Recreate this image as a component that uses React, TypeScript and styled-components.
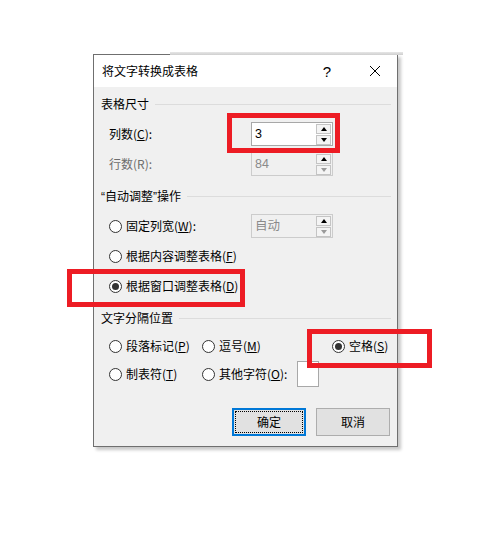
import styled, { createGlobalStyle } from 'styled-components';

const GlobalStyle = createGlobalStyle`
  html, body {
    margin: 0;
    padding: 0;
    background: #ffffff;
  }
  body {
    font-family: "Noto Sans CJK SC", "Liberation Sans", sans-serif;
    font-size: 12px;
    color: #000;
  }
`;

const Page = styled.div`
  position: relative;
  min-height: 548px;
  padding: 54px 0 0 93px;
  box-sizing: border-box;
`;

const Dialog = styled.div`
  position: relative;
  width: 305px;
  height: 393px;
  box-sizing: border-box;
  border: 1px solid #6f6f6f;
  background: #f0f0f0;
  display: flex;
  flex-direction: column;
  box-shadow: 3px 3px 3px rgba(0, 0, 0, 0.22);

  &::before {
    content: '';
    position: absolute;
    top: -3px;
    left: 76px;
    right: -6px;
    height: 3px;
    background: linear-gradient(#e6e6e6, #cfcfcf);
  }
`;

const TitleBar = styled.div`
  height: 32px;
  background: #fff;
  display: flex;
  align-items: center;
  padding-left: 8px;
`;

const Title = styled.div`
  flex: 1;
  font-size: 12px;
  line-height: 16px;
`;

const Help = styled.div`
  width: 12px;
  font-family: "Liberation Sans", sans-serif;
  font-size: 15px;
  text-align: center;
  margin-right: 36px;
`;

const Close = styled.div`
  width: 12px;
  height: 12px;
  margin-right: 16px;
  display: flex;
`;

const Body = styled.div`
  flex: 1;
  display: flex;
  flex-direction: column;
  padding: 9px 6px 0 7px;
`;

const SectionHeader = styled.div<{ $gap: number }>`
  height: 16px;
  display: flex;
  align-items: center;
  gap: 6px;
  line-height: 16px;
  margin-top: ${(p) => p.$gap}px;

  &::after {
    content: '';
    flex: 1;
    height: 1px;
    background: #dcdcdc;
  }
`;

const Quote = styled.span`
  font-family: "Liberation Sans", sans-serif;
`;

const FieldRow = styled.div<{ $gap: number }>`
  display: flex;
  align-items: center;
  height: 24px;
  margin-top: ${(p) => p.$gap}px;
  margin-left: 8px;
  line-height: 16px;
`;

const Label = styled.div<{ $disabled?: boolean }>`
  width: 142px;
  color: ${(p) => (p.$disabled ? '#6d6d6d' : '#000')};
`;

const SpinBox = styled.div<{ $disabled?: boolean }>`
  width: 82px;
  height: 24px;
  box-sizing: border-box;
  border: 1px solid ${(p) => (p.$disabled ? '#cccccc' : '#a8a8a8')};
  background: ${(p) => (p.$disabled ? '#f0f0f0' : '#fff')};
  display: flex;
  align-items: center;
  padding: 0 1px 0 3px;
  font-family: "Liberation Sans", "Noto Sans CJK SC", sans-serif;
  color: ${(p) => (p.$disabled ? '#8a8a8a' : '#000')};
`;

const SpinValue = styled.span`
  flex: 1;
  font-size: 12.5px;
`;

const SpinButtons = styled.div`
  width: 15px;
  display: flex;
  flex-direction: column;
  gap: 1px;
`;

const SpinButton = styled.div`
  height: 10px;
  box-sizing: border-box;
  border: 1px solid #c4c4c4;
  background: #f4f4f4;
  display: flex;
  align-items: center;
  justify-content: center;
`;

const Arrow = styled.span<{ $down?: boolean; $dim?: boolean }>`
  width: 0;
  height: 0;
  border-left: 3.5px solid transparent;
  border-right: 3.5px solid transparent;
  ${(p) => (p.$down ? 'border-top' : 'border-bottom')}: 4px solid ${(p) => (p.$dim ? '#9a9a9a' : '#000')};
`;

const RadioLabel = styled.label`
  display: flex;
  align-items: center;
  gap: 4px;
  white-space: nowrap;
`;

const RadioDot = styled.span<{ $checked?: boolean }>`
  width: 13px;
  height: 13px;
  box-sizing: border-box;
  border: 1px solid #333;
  border-radius: 50%;
  background: #fff;
  display: flex;
  align-items: center;
  justify-content: center;

  &::after {
    content: '';
    width: 7px;
    height: 7px;
    border-radius: 50%;
    background: ${(p) => (p.$checked ? '#333' : 'transparent')};
  }
`;

const RadioGroup = styled.div`
  display: flex;
  flex-direction: column;
  margin: 7px 0 0 8px;
`;

const RadioRow = styled.div`
  height: 30px;
  display: flex;
  align-items: center;
  line-height: 16px;
`;

const RadioCell = styled.div`
  width: 142px;
`;

const SeparatorGrid = styled.div`
  display: grid;
  grid-template-columns: 93px 130px auto;
  grid-template-rows: 26px 26px;
  row-gap: 2px;
  align-items: center;
  margin: 7px 0 0 8px;
  line-height: 16px;
`;

const OtherCell = styled.div`
  display: flex;
  align-items: center;
`;

const OtherInput = styled.div`
  width: 22px;
  height: 26px;
  box-sizing: border-box;
  border: 1px solid #a8a8a8;
  background: #fff;
  margin-left: 10px;
`;

const ButtonRow = styled.div`
  display: flex;
  justify-content: flex-end;
  gap: 10px;
  margin-top: 21px;
  margin-right: 1px;
`;

const Button = styled.button<{ $primary?: boolean }>`
  width: 74px;
  height: 28px;
  box-sizing: border-box;
  background: #e1e1e1;
  border: ${(p) => (p.$primary ? '2px solid #0078d7' : '1px solid #adadad')};
  font-family: "Noto Sans CJK SC", sans-serif;
  font-size: 12px;
  line-height: 16px;
  padding: 0;
  position: relative;
  color: #000;

  ${(p) =>
    p.$primary &&
    `
    &::after {
      content: '';
      position: absolute;
      inset: 1px;
      border: 1px dotted #000;
    }
  `}
`;

const Mark = styled.div<{ $x: number; $y: number; $w: number; $h: number }>`
  position: absolute;
  left: ${(p) => p.$x}px;
  top: ${(p) => p.$y}px;
  width: ${(p) => p.$w}px;
  height: ${(p) => p.$h}px;
  box-sizing: border-box;
  border: 5px solid #ed1c24;
`;

const Spin = ({ value, disabled }: { value: string; disabled?: boolean }) => (
  <SpinBox $disabled={disabled}>
    <SpinValue>{value}</SpinValue>
    <SpinButtons>
      <SpinButton>
        <Arrow />
      </SpinButton>
      <SpinButton>
        <Arrow $down $dim={disabled} />
      </SpinButton>
    </SpinButtons>
  </SpinBox>
);

const Radio = ({ checked, children }: { checked?: boolean; children: React.ReactNode }) => (
  <RadioLabel>
    <RadioDot $checked={checked} />
    <span>{children}</span>
  </RadioLabel>
);

const App = () => {
  return (
    <Page>
      <GlobalStyle />
      <Dialog>
        <TitleBar>
          <Title>将文字转换成表格</Title>
          <Help>?</Help>
          <Close>
            <svg width="12" height="12" viewBox="0 0 12 12">
              <path d="M1 1 L11 11 M11 1 L1 11" stroke="#000" strokeWidth="1" fill="none" />
            </svg>
          </Close>
        </TitleBar>
        <Body>
          <SectionHeader $gap={0}>表格尺寸</SectionHeader>
          <FieldRow $gap={10}>
            <Label>
              列数(<u>C</u>):
            </Label>
            <Spin value="3" />
          </FieldRow>
          <FieldRow $gap={6}>
            <Label $disabled>行数(R):</Label>
            <Spin value="84" disabled />
          </FieldRow>

          <SectionHeader $gap={12}>
            <span>
              <Quote>“</Quote>自动调整<Quote>”</Quote>操作
            </span>
          </SectionHeader>
          <RadioGroup>
            <RadioRow>
              <RadioCell>
                <Radio>
                  固定列宽(<u>W</u>):
                </Radio>
              </RadioCell>
              <Spin value="自动" disabled />
            </RadioRow>
            <RadioRow>
              <Radio>
                根据内容调整表格(<u>F</u>)
              </Radio>
            </RadioRow>
            <RadioRow>
              <Radio checked>
                根据窗口调整表格(<u>D</u>)
              </Radio>
            </RadioRow>
          </RadioGroup>

          <SectionHeader $gap={9}>文字分隔位置</SectionHeader>
          <SeparatorGrid>
            <Radio>
              段落标记(<u>P</u>)
            </Radio>
            <Radio>
              逗号(<u>M</u>)
            </Radio>
            <Radio checked>
              空格(<u>S</u>)
            </Radio>
            <Radio>
              制表符(<u>T</u>)
            </Radio>
            <OtherCell>
              <Radio>
                其他字符(<u>O</u>):
              </Radio>
              <OtherInput />
            </OtherCell>
          </SeparatorGrid>

          <ButtonRow>
            <Button $primary>确定</Button>
            <Button>取消</Button>
          </ButtonRow>
        </Body>
      </Dialog>

      <Mark $x={227} $y={113} $w={113} $h={40} />
      <Mark $x={67} $y={269} $w={178} $h={38} />
      <Mark $x={307} $y={329} $w={125} $h={39} />
    </Page>
  );
};

export default App;
